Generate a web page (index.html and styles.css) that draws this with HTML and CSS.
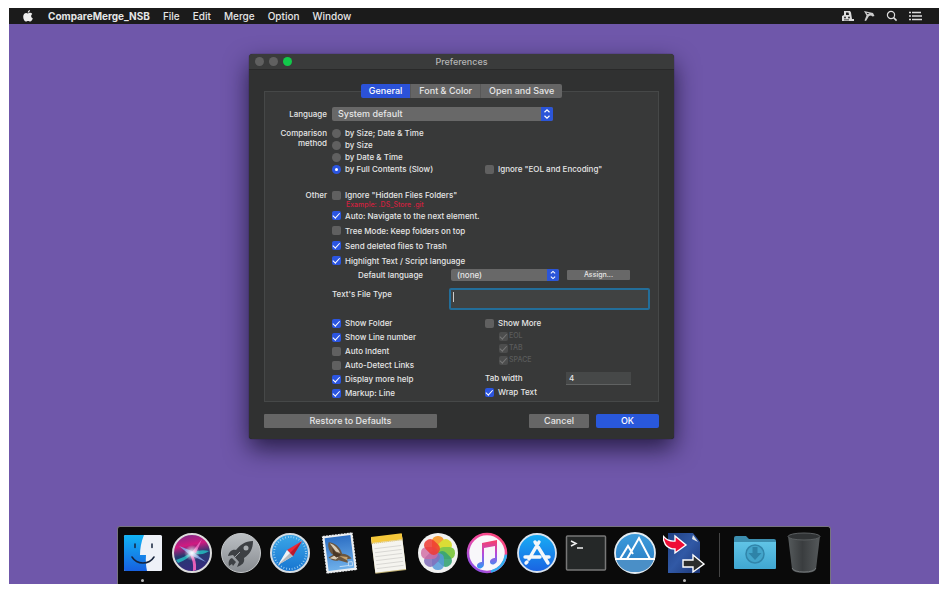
FILE: index.html
```html
<!DOCTYPE html>
<html lang="en">
<head>
<meta charset="utf-8">
<title>CompareMerge_NSB Preferences</title>
<link rel="stylesheet" href="styles.css">
</head>
<body>
<div class="desktop">
  <header class="menubar">
    <svg class="apple" viewBox="0 0 10 12" aria-hidden="true"><path fill="#eee" d="M6.9 0C7 1.400 6 2.600 4.800 2.700 4.700 1.500 5.700.2 6.900 0zM5 3.400c.5 0 1.100-.6 2.100-.6.900 0 1.700.4 2.200 1.100-1.800 1.100-1.500 3.700.5 4.500-.5 1.500-1.500 3.100-2.600 3.100-.8 0-1.200-.5-2.100-.5s-1.300.5-2.100.5C1.500 11.500.2 9.200.2 6.700.2 4.300 1.600 2.900 3.100 2.900c.8 0 1.400.5 1.900.5z"/></svg>
    <nav class="menus">
      <a class="app-name" href="#">CompareMerge_NSB</a>
      <a href="#">File</a>
      <a href="#">Edit</a>
      <a href="#">Merge</a>
      <a href="#">Option</a>
      <a href="#">Window</a>
    </nav>
    <div class="status">
      <svg width="14" height="12" viewBox="0 0 14 12" aria-hidden="true"><path fill="#ddd" d="M3 1h6l1 1.500L11 9h2v2H1V6l2-1z"/><path fill="#1b1b1b" d="M5 2.500h2.500L8 5H5zM3 9.500h5v.8H3z"/><circle cx="4" cy="7.500" r=".9" fill="#1b1b1b"/><circle cx="8" cy="7.500" r=".9" fill="#1b1b1b"/></svg>
      <svg width="12" height="12" viewBox="0 0 12 12" aria-hidden="true"><path fill="#ccc" d="M1 1l9 2 1.500 3-2 .5L8 5.500 6 6l-3 5-1.500-.5 2-5z"/><path fill="#1b1b1b" d="M3.500 2.700l3 .8-2 .8z"/></svg>
      <svg class="search" width="12" height="12" viewBox="0 0 12 12" aria-hidden="true"><circle cx="5" cy="5" r="3.600" fill="none" stroke="#ddd" stroke-width="1.200"/><path stroke="#ddd" stroke-width="1.500" d="M7.600 7.600l3 3"/></svg>
      <svg class="list" width="14" height="12" viewBox="0 0 14 12" aria-hidden="true"><path stroke="#ddd" stroke-width="1.700" d="M0 2.500h2M3 2.500h9M0 6h2M3 6h10M0 9.500h2M3 9.500h10"/></svg>
    </div>
  </header>

  <main class="window">
    <div class="titlebar">
      <div class="lights"><i></i><i></i><i class="zoom"></i></div>
      <h1>Preferences</h1>
    </div>
    <form class="content">
      <div class="tabs">
        <button type="button" class="tab active">General</button>
        <button type="button" class="tab">Font &amp; Color</button>
        <button type="button" class="tab">Open and Save</button>
      </div>
      <div class="group">
        <div class="row language">
          <label class="lead" for="lang">Language</label>
          <span class="picker">
            <select id="lang"><option>System default</option></select>
            <svg viewBox="0 0 12 14" aria-hidden="true"><path fill="none" stroke="#fff" stroke-width="1.200" d="M3.500 5.200L6 2.800l2.500 2.400M3.500 8.800L6 11.200l2.500-2.400"/></svg>
          </span>
        </div>
        <div class="row methods">
          <span class="lead">Comparison method</span>
          <div class="pair">
            <div>
              <label class="choice"><input type="radio" name="method">by Size; Date &amp; Time</label>
              <label class="choice"><input type="radio" name="method">by Size</label>
              <label class="choice"><input type="radio" name="method">by Date &amp; Time</label>
              <label class="choice"><input type="radio" name="method" checked>by Full Contents (Slow)</label>
            </div>
            <label class="choice low"><input type="checkbox">Ignore "EOL and Encoding"</label>
          </div>
        </div>
        <div class="row other">
          <span class="lead">Other</span>
          <div>
            <label class="choice"><input type="checkbox">Ignore "Hidden Files Folders"</label>
            <p class="example">Example: .DS_Store .git</p>
            <div class="options">
              <label class="choice"><input type="checkbox" checked>Auto: Navigate to the next element.</label>
              <label class="choice"><input type="checkbox">Tree Mode: Keep folders on top</label>
              <label class="choice"><input type="checkbox" checked>Send deleted files to Trash</label>
              <label class="choice"><input type="checkbox" checked>Highlight Text / Script language</label>
            </div>
            <div class="default-language">
              <label for="script">Default language</label>
              <span class="picker small">
                <select id="script"><option>(none)</option></select>
                <svg viewBox="0 0 12 14" aria-hidden="true"><path fill="none" stroke="#fff" stroke-width="1.200" d="M3.500 5.200L6 2.800l2.500 2.400M3.500 8.800L6 11.200l2.500-2.400"/></svg>
              </span>
              <button type="button" class="assign">Assign...</button>
            </div>
            <div class="file-type">
              <label for="ftype">Text's File Type</label>
              <span class="type-box"><textarea id="ftype" rows="1"></textarea><i class="caret"></i></span>
            </div>
            <div class="pair">
              <div class="options editor">
                <label class="choice"><input type="checkbox" checked>Show Folder</label>
                <label class="choice"><input type="checkbox" checked>Show Line number</label>
                <label class="choice"><input type="checkbox">Auto Indent</label>
                <label class="choice"><input type="checkbox">Auto-Detect Links</label>
                <label class="choice"><input type="checkbox" checked>Display more help</label>
                <label class="choice"><input type="checkbox" checked>Markup: Line</label>
              </div>
              <div class="options editor">
                <label class="choice"><input type="checkbox">Show More</label>
                <div class="more">
                  <label class="choice"><input type="checkbox" checked disabled>EOL</label>
                  <label class="choice"><input type="checkbox" checked disabled>TAB</label>
                  <label class="choice"><input type="checkbox" checked disabled>SPACE</label>
                </div>
                <div class="tab-width"><label for="tabw">Tab width</label><input id="tabw" type="text" value="4"></div>
                <label class="choice"><input type="checkbox" checked>Wrap Text</label>
              </div>
            </div>
          </div>
        </div>
      </div>
      <div class="actions">
        <button type="button" class="restore">Restore to Defaults</button>
        <button type="button" class="cancel">Cancel</button>
        <button type="button" class="ok">OK</button>
      </div>
    </form>
  </main>

  <footer class="dock">
    <div class="apps">
      <div class="app running">
        <svg viewBox="0 0 42 42"><defs><linearGradient id="fa" x2="0" y2="1"><stop stop-color="#12b4f5"/><stop offset="1" stop-color="#1660e0"/></linearGradient></defs><rect x="2" y="3" width="38" height="36" rx="1.500" fill="#eef1f8"/><path fill="url(#fa)" d="M3.500 3H22C19 10 18 17 18 23h6c-.5 6 0 11 1 16H3.500Q2 39 2 37.500v-33Q2 3 3.500 3z"/><path fill="none" stroke="#16233c" stroke-width="1.500" stroke-linecap="round" d="M13 12v3.500M30 12v3.500M10 25c5 8 17 8 22 0"/></svg>
      </div>
      <div class="app">
        <svg viewBox="0 0 42 42"><defs><linearGradient id="sa" x1=".3" x2=".5" y2="1"><stop stop-color="#7c2a88"/><stop offset=".3" stop-color="#d01a80"/><stop offset=".55" stop-color="#243a70"/><stop offset="1" stop-color="#3a2a80"/></linearGradient><radialGradient id="sb"><stop stop-color="#fff"/><stop offset="1" stop-color="#fff" stop-opacity="0"/></radialGradient></defs><circle cx="21" cy="21" r="19" fill="url(#sa)" stroke="#ddd" stroke-width="2"/><path fill="#25c4c6" opacity=".8" d="M5 28q9-3 16-8 10-3 17-1-6 5-16 2-6 7-15 10z"/><path fill="#e65fb8" d="M20 20q6 8 5 18l-3 1q1-10-4-18zM21 20L31 7l-6 14z"/><path fill="#8fb3f4" opacity=".8" d="M8 14l13 5 14 11-16-7z"/><circle cx="21" cy="21" r="8" fill="url(#sb)"/></svg>
      </div>
      <div class="app">
        <svg viewBox="0 0 42 42"><defs><linearGradient id="ra" x2="0" y2="1"><stop stop-color="#bcc0c4"/><stop offset="1" stop-color="#878b90"/></linearGradient></defs><circle cx="21" cy="21" r="19.500" fill="url(#ra)" stroke="#c5c8ca"/><path fill="#3d4044" d="M33 9c-8 0-13 4-17 9-4-1-7 2-8 6l5-1 6 7-2 5c5-2 8-4 7-9 6-4 9-9 9-17zM12 26c-3 1-4 4-3 8l3-2 1 2 3-4z"/><circle cx="26" cy="16" r="2.500" fill="#a8acb0"/><path stroke="#9da1a5" d="M15 25l5-5"/></svg>
      </div>
      <div class="app">
        <svg viewBox="0 0 42 42"><defs><linearGradient id="ca" x2="0" y2="1"><stop stop-color="#3ba7e8"/><stop offset="1" stop-color="#1774d0"/></linearGradient></defs><circle cx="21" cy="21" r="19" fill="url(#ca)" stroke="#d5dce2" stroke-width="2"/><circle cx="21" cy="21" r="16" fill="none" stroke="#a4d4f4" stroke-width="2" stroke-dasharray=".8 2"/><path fill="#ed2939" d="M33 9L18 18l6 6z"/><path fill="#eef2f5" d="M9 33l9-15 6 6z"/><path fill="#b9b9bd" d="M9 33l12-12 3 3z"/><path fill="#b9192c" d="M33 9L21 21l3 3z"/></svg>
      </div>
      <div class="app">
        <svg viewBox="0 0 42 42"><defs><linearGradient id="ma" x2="0" y2="1"><stop stop-color="#2d6fc4"/><stop offset="1" stop-color="#6fb0ea"/></linearGradient></defs><g transform="rotate(-7 21 21)"><rect x="5" y="2" width="31" height="38" fill="#eceef0"/><rect x="5" y="2" width="31" height="38" fill="none" stroke="#000" stroke-width="1" stroke-dasharray="1 2"/><rect x="7.500" y="4.500" width="26" height="33" fill="url(#ma)"/><path fill="#6b563f" d="M11 9c6 1 11 6 12 13 4 0 7 3 9 6l-5 0 1 4-9-4c-4 1-7-1-10-4l5-2C11 20 9 14 11 9z"/><path fill="#d9cdb8" d="M12 10c5 2 8 7 9 11l-4-2zM10 25l5-2 4 2-3 2z"/><path fill="#c8a26b" d="M20 24l8 2-1 3z"/><path fill="#4a3726" d="M14 15l3 5 5 3-5 2-3-3z"/><path fill="none" stroke="#cfe4f6" stroke-width=".8" d="M19 34.500h9M28 31h4v4h-4z"/></g></svg>
      </div>
      <div class="app">
        <svg viewBox="0 0 42 42"><g transform="rotate(-7 21 21)"><path fill="#bdae72" d="M5 4h31v36H5z"/><path fill="#f5f4ef" d="M5 4h31v35H5z"/><path fill="#f5c73a" d="M5 3h31v6H5z"/><path stroke="#cfae40" stroke-dasharray="1 1" d="M5 9.500h31"/><path stroke="#d3d2ce" stroke-width=".8" d="M7 15h27M7 19h27M7 23h27M7 27h27M7 31h27M7 35h27"/></g></svg>
      </div>
      <div class="app">
        <svg viewBox="0 0 42 42"><circle cx="21" cy="21" r="20" fill="#f1f1f1"/><g opacity=".95"><rect x="15" y="4" width="12" height="17" rx="5.500" fill="#f7982f"/><rect x="15" y="4" width="12" height="17" rx="5.500" fill="#d9dc2c" transform="rotate(45 21 21)"/><rect x="15" y="4" width="12" height="17" rx="5.500" fill="#7fc742" transform="rotate(90 21 21)"/><rect x="15" y="4" width="12" height="17" rx="5.500" fill="#2ea070" opacity=".9" transform="rotate(135 21 21)"/><rect x="15" y="4" width="12" height="17" rx="5.500" fill="#4d95d8" opacity=".85" transform="rotate(180 21 21)"/><rect x="15" y="4" width="12" height="17" rx="5.500" fill="#7c67b8" opacity=".85" transform="rotate(225 21 21)"/><rect x="15" y="4" width="12" height="17" rx="5.500" fill="#d0639e" opacity=".8" transform="rotate(270 21 21)"/><rect x="15" y="4" width="12" height="17" rx="5.500" fill="#ef3028" opacity=".85" transform="rotate(315 21 21)"/></g></svg>
      </div>
      <div class="app">
        <svg viewBox="0 0 42 42"><defs><linearGradient id="ia" x1="1" x2=".2" y2="1"><stop stop-color="#fd456e"/><stop offset=".5" stop-color="#ef4ca6"/><stop offset="1" stop-color="#8a4ee8"/></linearGradient><linearGradient id="ib" x2="0" y2="1"><stop stop-color="#fb3f64"/><stop offset=".5" stop-color="#b14ae0"/><stop offset="1" stop-color="#2c9af2"/></linearGradient></defs><circle cx="21" cy="21" r="19" fill="#f8f7fa" stroke="url(#ia)" stroke-width="2.500"/><path fill="none" stroke="#30aef0" stroke-width="2.500" d="M25 39.600q13-4 15-17"/><path fill="url(#ib)" d="M16 11l15-3v20c0 5-7 6-7 2 0-3 3-4 5-4V14l-11 2v16c0 5-7 6-7 2 0-3 3-4 5-4z"/></svg>
      </div>
      <div class="app">
        <svg viewBox="0 0 42 42"><defs><linearGradient id="aa" x2="0" y2="1"><stop stop-color="#18aef5"/><stop offset="1" stop-color="#1a62e2"/></linearGradient></defs><circle cx="21" cy="21" r="19" fill="url(#aa)" stroke="#d9e3ee" stroke-width="1.800"/><path fill="none" stroke="#f4f7fa" stroke-width="3.400" stroke-linecap="round" d="M23 10L13 27M19 10l13 21M9 25h15M29 25h4M11 30l-1 1"/></svg>
      </div>
      <div class="app">
        <svg viewBox="0 0 42 42"><rect x="1.500" y="4" width="39" height="34" rx="1" fill="#252828" stroke="#777" stroke-width="1.500"/><path fill="none" stroke="#eee" stroke-width="1.500" d="M6 9l5 2.500L6 14M12 16h6"/></svg>
      </div>
      <div class="app">
        <svg viewBox="0 0 42 42"><defs><linearGradient id="xa" x2="0" y2="1"><stop stop-color="#3d9cdc"/><stop offset="1" stop-color="#2878bf"/></linearGradient></defs><circle cx="21" cy="21" r="20" fill="url(#xa)" stroke="#e4ecf2" stroke-width="1.800"/><path fill="#4a8fc7" d="M2 27h38q-4 13-19 13T2 27z"/><path fill="none" stroke="#fff" stroke-width="2" d="M1 27h40M6 27l8-13 5 8M13 27L25 6l11 21"/></svg>
      </div>
      <div class="app running">
        <svg viewBox="0 0 42 42"><defs><linearGradient id="na" x2="1" y2="1"><stop stop-color="#204183"/><stop offset=".5" stop-color="#3159a6"/><stop offset="1" stop-color="#1c3676"/></linearGradient></defs><path fill="url(#na)" d="M5 1h25l7 9v31H5z"/><path fill="#e4e6e8" d="M30 3l5 7-6-3z"/><path fill="#f00d35" stroke="#fff" stroke-width="1.400" d="M0 4q5 6 12 5V4l11 9-11 8v-4Q1 17 0 4z"/><path fill="#2b2d2c" stroke="#fff" stroke-width="1.400" d="M20 28h10v-5l11 9-11 8v-5H20z"/></svg>
      </div>
    </div>
    <i class="divider"></i>
    <div class="places">
      <div class="app">
        <svg class="wide" viewBox="0 0 46 42"><defs><linearGradient id="da" x2="0" y2="1"><stop stop-color="#60c4e6"/><stop offset="1" stop-color="#40a7d2"/></linearGradient></defs><path fill="#3c8eaf" d="M2 6q0-2 2-2h10l3 3h25q2 0 2 2v5H2z"/><path fill="url(#da)" d="M2 10h42v26q0 1-1 1H3q-1 0-1-1z"/><circle cx="23" cy="22" r="9" fill="#43a5cb" stroke="#3185aa" stroke-width="1.500"/><path fill="#2e83a8" d="M20.500 15h5v6h4L23 28l-6.500-7h4z"/></svg>
      </div>
      <div class="app">
        <svg viewBox="0 0 42 42"><defs><linearGradient id="ta"><stop stop-color="#555a5c"/><stop offset=".45" stop-color="#3a3d3f"/><stop offset="1" stop-color="#55595b"/></linearGradient></defs><path fill="url(#ta)" d="M5 4l4 33q1 4 12 4t12-4l4-33z"/><ellipse cx="21" cy="4.500" rx="16" ry="3.500" fill="#303335" stroke="#5b5f61"/><path fill="none" stroke="#74787a" d="M9 36q2 4 12 4t12-4"/></svg>
      </div>
    </div>
  </footer>
</div>
</body>
</html>
```
FILE: styles.css
```css
* { box-sizing: border-box; }

body {
  margin: 0;
  padding: 8px 12px 9px 9px;
  min-height: 100vh;
  display: flex;
  background: #fff;
  font: 500 8px/12px Inter, "Liberation Sans", sans-serif;
  color: #e6e6e6;
}

button, input, select, textarea {
  margin: 0;
  border: 0;
  font: inherit;
  color: inherit;
}

.desktop {
  position: relative;
  flex: 1;
  display: flex;
  flex-direction: column;
  justify-content: space-between;
  align-items: center;
  background: #6f57aa;
}

/* Menu bar */
.menubar {
  align-self: stretch;
  height: 16px;
  padding: 0 16px 0 14px;
  display: flex;
  align-items: center;
  background: #1b1b1b;
  font-size: 10px;
}
.apple { width: 10px; height: 12px; }
.menus { display: flex; gap: 13px; margin-left: 15px; }
.menus a { color: #e6e6e6; text-decoration: none; }
.menus .app-name { font-weight: 700; }
.status { display: flex; align-items: center; gap: 8px; margin-left: auto; }
.status .search { margin-left: 3px; }
.status .list { margin-left: 3px; }

/* Preferences window */
.window {
  position: absolute;
  left: 240px;
  top: 46px;
  width: 425px;
  border-radius: 4px 4px 3px 3px;
  background: #303131;
  box-shadow: 0 0 1px #111, 0 10px 24px rgba(10, 5, 30, .7);
}
.titlebar {
  height: 16px;
  padding: 0 6px;
  display: grid;
  grid-template-columns: 1fr auto 1fr;
  align-items: center;
  border-radius: 4px 4px 0 0;
  background: #3a3b3b;
  border-bottom: 1px solid #292929;
}
.titlebar h1 { margin: 0; font-size: 9px; font-weight: 500; color: #b5b5b5; }
.lights { display: flex; gap: 5px; }
.lights i { width: 9px; height: 9px; border-radius: 50%; background: #606060; }
.lights .zoom { background: #12c94a; }

.content { padding: 14px 15px 11px; }
.tabs { position: relative; display: flex; justify-content: center; }
.tab {
  height: 14px;
  padding: 0 8px;
  background: #656565;
  font-size: 9px;
  line-height: 14px;
  border-left: 1px solid #585858;
}
.tab:last-child { border-radius: 0 2px 2px 0; }
.tab.active { background: #2b52d8; border: 0; border-radius: 2px 0 0 2px; color: #fff; }

.group {
  margin-top: -7px;
  padding: 15px 0 1px;
  border: 1px solid #464848;
  background: #383939;
}
.row { display: grid; grid-template-columns: 62px 1fr; column-gap: 5px; }
.lead { text-align: right; line-height: 12px; }
.language { align-items: center; }
.methods { margin-top: 6px; }
.other { margin-top: 14px; }
.methods .lead { line-height: 10px; padding-top: 1px; }
.pair { display: grid; grid-template-columns: 153px 1fr; }
.low { align-self: end; }

.choice { display: flex; align-items: center; gap: 4px; height: 12px; white-space: nowrap; }
.choice input {
  appearance: none;
  display: grid;
  place-items: center;
  width: 9px;
  height: 9px;
  border-radius: 2px;
  background: #606060;
}
.choice input[type="radio"] { border-radius: 50%; }
.choice input:checked { background: #2b55e0; }
.choice input[type="checkbox"]:checked::after {
  content: "";
  width: 3px;
  height: 6px;
  border: solid #fff;
  border-width: 0 1px 1px 0;
  transform: rotate(42deg) translate(-1px, 0);
}
.choice input[type="radio"]:checked::after {
  content: "";
  width: 3px;
  height: 3px;
  border-radius: 50%;
  background: #fff;
}

.picker { position: relative; width: 221px; height: 14px; }
.picker select {
  appearance: none;
  display: block;
  width: 100%;
  height: 100%;
  padding: 0 18px 0 6px;
  border-radius: 2px;
  background: #686868;
  font-size: 9px;
}
.picker svg {
  position: absolute;
  right: 0;
  top: 0;
  width: 12px;
  height: 100%;
  border-radius: 0 2px 2px 0;
  background: #2b55d8;
}
.picker.small { width: 108px; height: 12px; }
.picker.small select { font-size: 8px; }

.example { margin: 0; padding-left: 14px; font-size: 7px; line-height: 7px; color: #d0213f; }
.options .choice { height: 15px; }
.options.editor .choice { height: 14px; }
.options .more { padding: 0 0 5px 14px; color: #5b5c5c; font-size: 7px; }
.options.editor .more .choice { height: 12px; gap: 1px; }
.more .choice input:checked { background: #4c4d4d; }
.more .choice input[type="checkbox"]:checked::after { border-color: #777; }

.default-language {
  display: grid;
  grid-template-columns: 93px 108px 63px;
  column-gap: 8px;
  align-items: center;
  height: 13px;
  padding-left: 18px;
}
.default-language label { margin-left: 8px; }
.assign { height: 10px; padding: 0; border-radius: 1px; background: #686868; font-size: 7px; line-height: 10px; }

.file-type { display: grid; grid-template-columns: 117px 201px; margin: 7px 0 6px; }
.type-box { position: relative; height: 22px; }
.type-box textarea {
  display: block;
  width: 100%;
  height: 100%;
  padding: 2px 4px;
  border: 2px solid #236e9a;
  border-radius: 2px;
  background: #404242;
  outline: 0;
  resize: none;
  overflow: hidden;
}
.caret { position: absolute; left: 4px; top: 4px; width: 1px; height: 10px; background: #ccc; }

.tab-width { display: grid; grid-template-columns: 81px 65px; align-items: center; height: 14px; }
.tab-width input {
  width: 100%;
  height: 13px;
  padding: 0 3px;
  background: #464848;
  border-bottom: 1px solid #606262;
}

.actions { display: flex; gap: 7px; margin-top: 12px; }
.actions button { height: 14px; padding: 0; border-radius: 1px; background: #666; font-size: 9px; line-height: 14px; }
.actions .restore { width: 173px; margin-right: auto; }
.actions .cancel { width: 60px; }
.actions .ok { width: 63px; border-radius: 2px; background: #2958db; color: #fff; }

/* Dock */
.dock {
  display: flex;
  width: 714px;
  max-width: 100%;
  height: 58px;
  padding-right: 2px;
  border: 1px solid #77747f;
  border-bottom: 0;
  border-radius: 3px 3px 0 0;
  background: #0a0a0a;
}
.apps { flex: 1; display: flex; }
.places { display: flex; width: 98px; }
.app { flex: 1; display: flex; flex-direction: column; align-items: center; padding-top: 5px; }
.app svg { display: block; width: 42px; height: 42px; }
.app .wide { width: 46px; }
.running::after { content: ""; width: 3px; height: 3px; margin-top: 5px; border-radius: 50%; background: #bbb; }
.divider { width: 1px; height: 44px; margin: 6px 10px 0; background: #454545; }
```
